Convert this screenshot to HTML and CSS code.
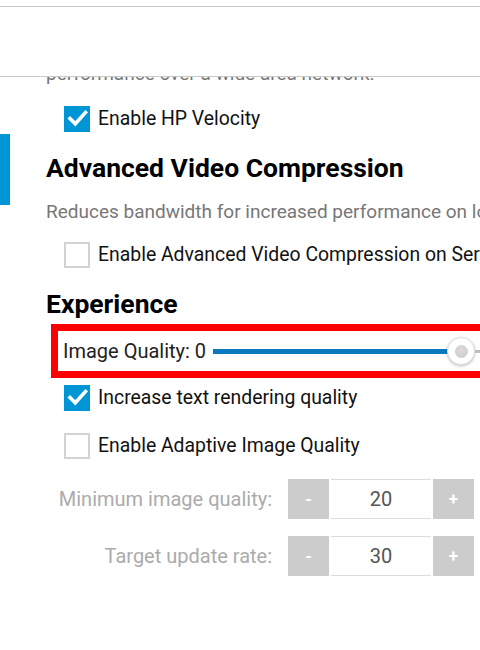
FILE: index.html
```html
<!DOCTYPE html>
<html lang="en">
<head>
<meta charset="utf-8">
<title>Settings</title>
<link rel="stylesheet" href="styles.css">
</head>
<body>
<div class="topbar"></div>
<div class="page">
  <div class="rail"><div class="rail-marker"></div></div>
  <main class="content">
    <p class="desc desc-first">performance over a wide area network.</p>

    <div class="check-row row-velocity">
      <span class="box checked"><svg viewBox="0 0 25 25" width="25" height="25"><path d="M5 12.5 L10.3 17.8 L20.5 6.5" fill="none" stroke="#fff" stroke-width="3.6" stroke-linecap="square" stroke-linejoin="miter"/></svg></span>
      <span class="check-label">Enable HP Velocity</span>
    </div>

    <h2 class="section-title title-avc">Advanced Video Compression</h2>
    <p class="desc desc-avc">Reduces bandwidth for increased performance on low bandwidth networks.</p>

    <div class="check-row row-avc">
      <span class="box"></span>
      <span class="check-label">Enable Advanced Video Compression on Server</span>
    </div>

    <h2 class="section-title title-exp">Experience</h2>

    <div class="highlight">
      <span class="slider-label">Image Quality: 0</span>
      <div class="slider">
        <div class="track-fill"></div>
        <div class="thumb"><div class="thumb-core"></div></div>
        <div class="track-rest"></div>
      </div>
    </div>

    <div class="check-row row-text">
      <span class="box checked"><svg viewBox="0 0 25 25" width="25" height="25"><path d="M5 12.5 L10.3 17.8 L20.5 6.5" fill="none" stroke="#fff" stroke-width="3.6" stroke-linecap="square" stroke-linejoin="miter"/></svg></span>
      <span class="check-label">Increase text rendering quality</span>
    </div>

    <div class="check-row row-adaptive">
      <span class="box"></span>
      <span class="check-label">Enable Adaptive Image Quality</span>
    </div>

    <div class="spin-row spin-first">
      <span class="spin-label">Minimum image quality:</span>
      <div class="spin">
        <span class="spin-btn">-</span>
        <span class="spin-value">20</span>
        <span class="spin-btn">+</span>
      </div>
    </div>

    <div class="spin-row spin-second">
      <span class="spin-label">Target update rate:</span>
      <div class="spin">
        <span class="spin-btn">-</span>
        <span class="spin-value">30</span>
        <span class="spin-btn">+</span>
      </div>
    </div>
  </main>
</div>
</body>
</html>
```
FILE: styles.css
```css
html, body {
  margin: 0;
  padding: 0;
  background: #fff;
  overflow: hidden;
  width: 480px;
  height: 650px;
}

body {
  font-family: Roboto, "Liberation Sans", sans-serif;
  color: #111;
  position: relative;
}

.topbar {
  position: absolute;
  top: 6px;
  left: 0;
  width: 480px;
  height: 69px;
  background: #fff;
  border-top: 1px solid #c9c9c9;
  border-bottom: 1px solid #c9c9c9;
  z-index: 2;
}

.page {
  display: flex;
}

.rail {
  width: 10px;
  flex: 0 0 10px;
}

.rail-marker {
  margin-top: 134px;
  height: 71px;
  background: #0096d6;
}

.content {
  flex: 1;
  padding: 62px 0 0 36px;
  display: flex;
  flex-direction: column;
  align-items: flex-start;
  min-width: 0;
}

.desc {
  margin: 0;
  font-size: 19px;
  line-height: 24px;
  color: #777;
  white-space: nowrap;
}

.desc-avc { margin-top: 16px; }

.check-row {
  display: flex;
  align-items: center;
  height: 25px;
  margin-left: 18px;
  gap: 8px;
  white-space: nowrap;
}

.row-velocity { margin-top: 20px; }
.row-avc { margin-top: 18px; }
.row-text { margin-top: 7px; }
.row-adaptive { margin-top: 23px; }

.box {
  width: 26px;
  height: 26px;
  box-sizing: border-box;
  border: 2px solid #d2d2d2;
  background: #fff;
  display: flex;
  flex: 0 0 26px;
}

.box.checked {
  border: 0;
  background: #0096d6;
  align-items: center;
  justify-content: center;
}

.check-label {
  font-size: 19.4px;
  line-height: 25px;
  color: #111;
}

.section-title {
  margin: 21px 0 0 0;
  font-size: 26.5px;
  line-height: 32px;
  font-weight: 700;
  color: #000;
  white-space: nowrap;
}

.highlight {
  margin-top: 4px;
  margin-left: 5px;
  width: 480px;
  height: 54px;
  box-sizing: border-box;
  border: 7px solid #ff0000;
  display: flex;
  align-items: center;
  padding-left: 5px;
  gap: 7px;
}

.slider-label {
  font-size: 20px;
  color: #222;
  white-space: nowrap;
}

.slider {
  display: flex;
  align-items: center;
  flex: 1;
}

.track-fill {
  width: 236px;
  height: 5px;
  background: #0b79bf;
}

.thumb {
  width: 28px;
  height: 28px;
  box-sizing: border-box;
  border-radius: 50%;
  background: #fff;
  border: 1px solid #e0e0e0;
  box-shadow: 0 1px 3px rgba(0,0,0,0.25);
  display: flex;
  align-items: center;
  justify-content: center;
  flex: 0 0 28px;
  margin-left: -2px;
}

.thumb-core {
  width: 13px;
  height: 13px;
  border-radius: 50%;
  background: radial-gradient(circle at 50% 40%, #dcdcdc, #c8c8c8);
}

.track-rest {
  flex: 1;
  height: 3px;
  background: #bdbdbd;
}

.spin-row {
  display: grid;
  grid-template-columns: 226px auto;
  column-gap: 16px;
  align-items: center;
}

.spin-first { margin-top: 21px; }
.spin-second { margin-top: 17px; }

.spin-label {
  text-align: right;
  font-size: 20px;
  color: #ababab;
  white-space: nowrap;
}

.spin {
  display: flex;
  height: 40px;
  gap: 2px;
}

.spin-btn {
  width: 41px;
  height: 40px;
  background: #cccccc;
  color: #fff;
  font-size: 17px;
  font-weight: 700;
  display: flex;
  align-items: center;
  justify-content: center;
}

.spin-value {
  width: 100px;
  height: 40px;
  box-sizing: border-box;
  border-top: 1px solid #dcdcdc;
  border-bottom: 1px solid #dcdcdc;
  display: flex;
  align-items: center;
  justify-content: center;
  font-size: 20px;
  color: #555;
}
```
